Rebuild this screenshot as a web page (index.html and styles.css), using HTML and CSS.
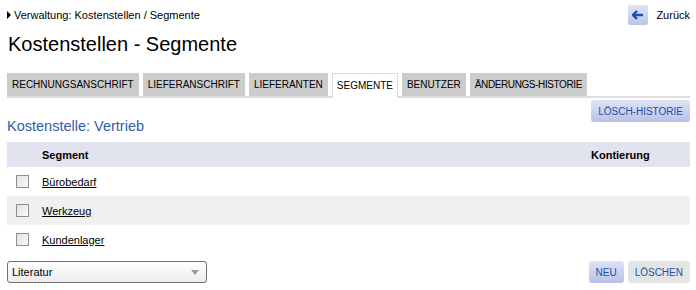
FILE: index.html
```html
<!DOCTYPE html>
<html lang="de">
<head>
    <meta charset="UTF-8">
    <title>Kostenstellen - Segmente</title>
    <link rel="stylesheet" href="styles.css">
</head>
<body>
<div class="topbar">
    <div class="crumb"><span class="crumb-arrow"></span>Verwaltung: Kostenstellen / Segmente</div>
    <div class="back">
        <span class="back-btn">
            <svg width="12" height="10" viewBox="0 0 12 10"><path d="M5 1 L1 5 L5 9 M1.5 5 H11" stroke="#1d4fb0" stroke-width="2.4" fill="none"/></svg>
        </span>
        <span>Zurück</span>
    </div>
</div>
<h1 class="title">Kostenstellen - Segmente</h1>

<div class="tabs">
    <span class="tab">RECHNUNGSANSCHRIFT</span>
    <span class="tab">LIEFERANSCHRIFT</span>
    <span class="tab">LIEFERANTEN</span>
    <span class="tab active">SEGMENTE</span>
    <span class="tab">BENUTZER</span>
    <span class="tab narrow">ÄNDERUNGS-HISTORIE</span>
</div>

<div class="subhead">
    <h2 class="subtitle">Kostenstelle: Vertrieb</h2>
    <button class="btn">LÖSCH-HISTORIE</button>
</div>

<table class="grid">
    <tr>
        <th class="col-check"></th>
        <th class="col-name">Segment</th>
        <th class="col-kont">Kontierung</th>
    </tr>
    <tr>
        <td class="col-check"><span class="check"></span></td>
        <td><a href="#">Bürobedarf</a></td>
        <td></td>
    </tr>
    <tr class="odd">
        <td class="col-check"><span class="check"></span></td>
        <td><a href="#">Werkzeug</a></td>
        <td></td>
    </tr>
    <tr>
        <td class="col-check"><span class="check"></span></td>
        <td><a href="#">Kundenlager</a></td>
        <td></td>
    </tr>
</table>

<div class="footer">
    <div class="select">Literatur<span class="select-arrow"></span></div>
    <div class="actions">
        <button class="btn">NEU</button>
        <button class="btn grey">LÖSCHEN</button>
    </div>
</div>
</body>
</html>
```

FILE: styles.css
```css
body {
    margin: 0;
    padding: 0 6px 0 7px;
    font-family: "Liberation Sans", Arial, sans-serif;
    font-size: 11px;
    color: #000;
    background: #fff;
}

.topbar {
    display: flex;
    justify-content: space-between;
    align-items: center;
    height: 28px;
    padding-top: 1px;
}

.crumb {
    display: flex;
    align-items: center;
}

.crumb-arrow {
    width: 0;
    height: 0;
    border-top: 4px solid transparent;
    border-bottom: 4px solid transparent;
    border-left: 4px solid #000;
    margin-right: 3px;
}

.back {
    display: flex;
    align-items: center;
    gap: 8px;
}

.back-btn {
    width: 20px;
    height: 20px;
    border-radius: 2px;
    background: linear-gradient(#dfe4f4, #bcc5e6);
    display: flex;
    align-items: center;
    justify-content: center;
}

.title {
    font-size: 20px;
    font-weight: normal;
    margin: 3px 0 0 1px;
    height: 28px;
    line-height: 24px;
}

.tabs {
    display: flex;
    gap: 4px;
    margin-top: 13px;
    border-bottom: 2px solid #ddd;
}

.tab {
    background: #cccccc;
    height: 23px;
    line-height: 24px;
    padding: 0 5px;
    font-size: 10px;
}

.tab.narrow {
    letter-spacing: -0.4px;
}

.tab.active {
    background: #fff;
    border: 1px solid #ddd;
    border-bottom: none;
    margin-bottom: -2px;
    height: 24px;
    padding: 0 4px;
}

.subhead {
    display: flex;
    justify-content: space-between;
    align-items: flex-start;
    margin-top: 2px;
    height: 42px;
}

.subtitle {
    font-size: 14.5px;
    font-weight: normal;
    color: #2e5eaa;
    margin: 18px 0 0 0;
}

.btn {
    font-family: "Liberation Sans", Arial, sans-serif;
    font-size: 10px;
    color: #1a4fa8;
    border: none;
    border-radius: 3px;
    background: linear-gradient(#dfe3f6, #b8c2e6);
    height: 22px;
    padding: 0 7px;
}

.btn.grey {
    background: #e4e4e4;
}

.grid {
    width: 100%;
    border-collapse: collapse;
}

.grid th {
    background: #e1e3ef;
    height: 25px;
    text-align: left;
    font-weight: bold;
    padding: 0;
}

.grid td {
    height: 29px;
    padding: 0;
}

.grid .odd td {
    background: #f0f0f0;
}

.col-check {
    width: 35px;
}

.col-kont {
    width: 99px;
}

.check {
    display: block;
    width: 11px;
    height: 11px;
    margin-left: 9px;
    border: 1px solid #8f8f8f;
    background: linear-gradient(135deg, #e2e2e2, #fbfbfb);
}

.grid a {
    color: #000;
}

.footer {
    display: flex;
    justify-content: space-between;
    align-items: center;
    margin-top: 7px;
}

.select {
    width: 187px;
    height: 20px;
    border: 1px solid #707070;
    border-radius: 3px;
    background: linear-gradient(#fff, #ececec);
    display: flex;
    align-items: center;
    justify-content: space-between;
    padding: 0 7px 0 4px;
}

.select-arrow {
    width: 0;
    height: 0;
    border-left: 4px solid transparent;
    border-right: 4px solid transparent;
    border-top: 5px solid #999;
}

.actions {
    display: flex;
    gap: 4px;
}
```
